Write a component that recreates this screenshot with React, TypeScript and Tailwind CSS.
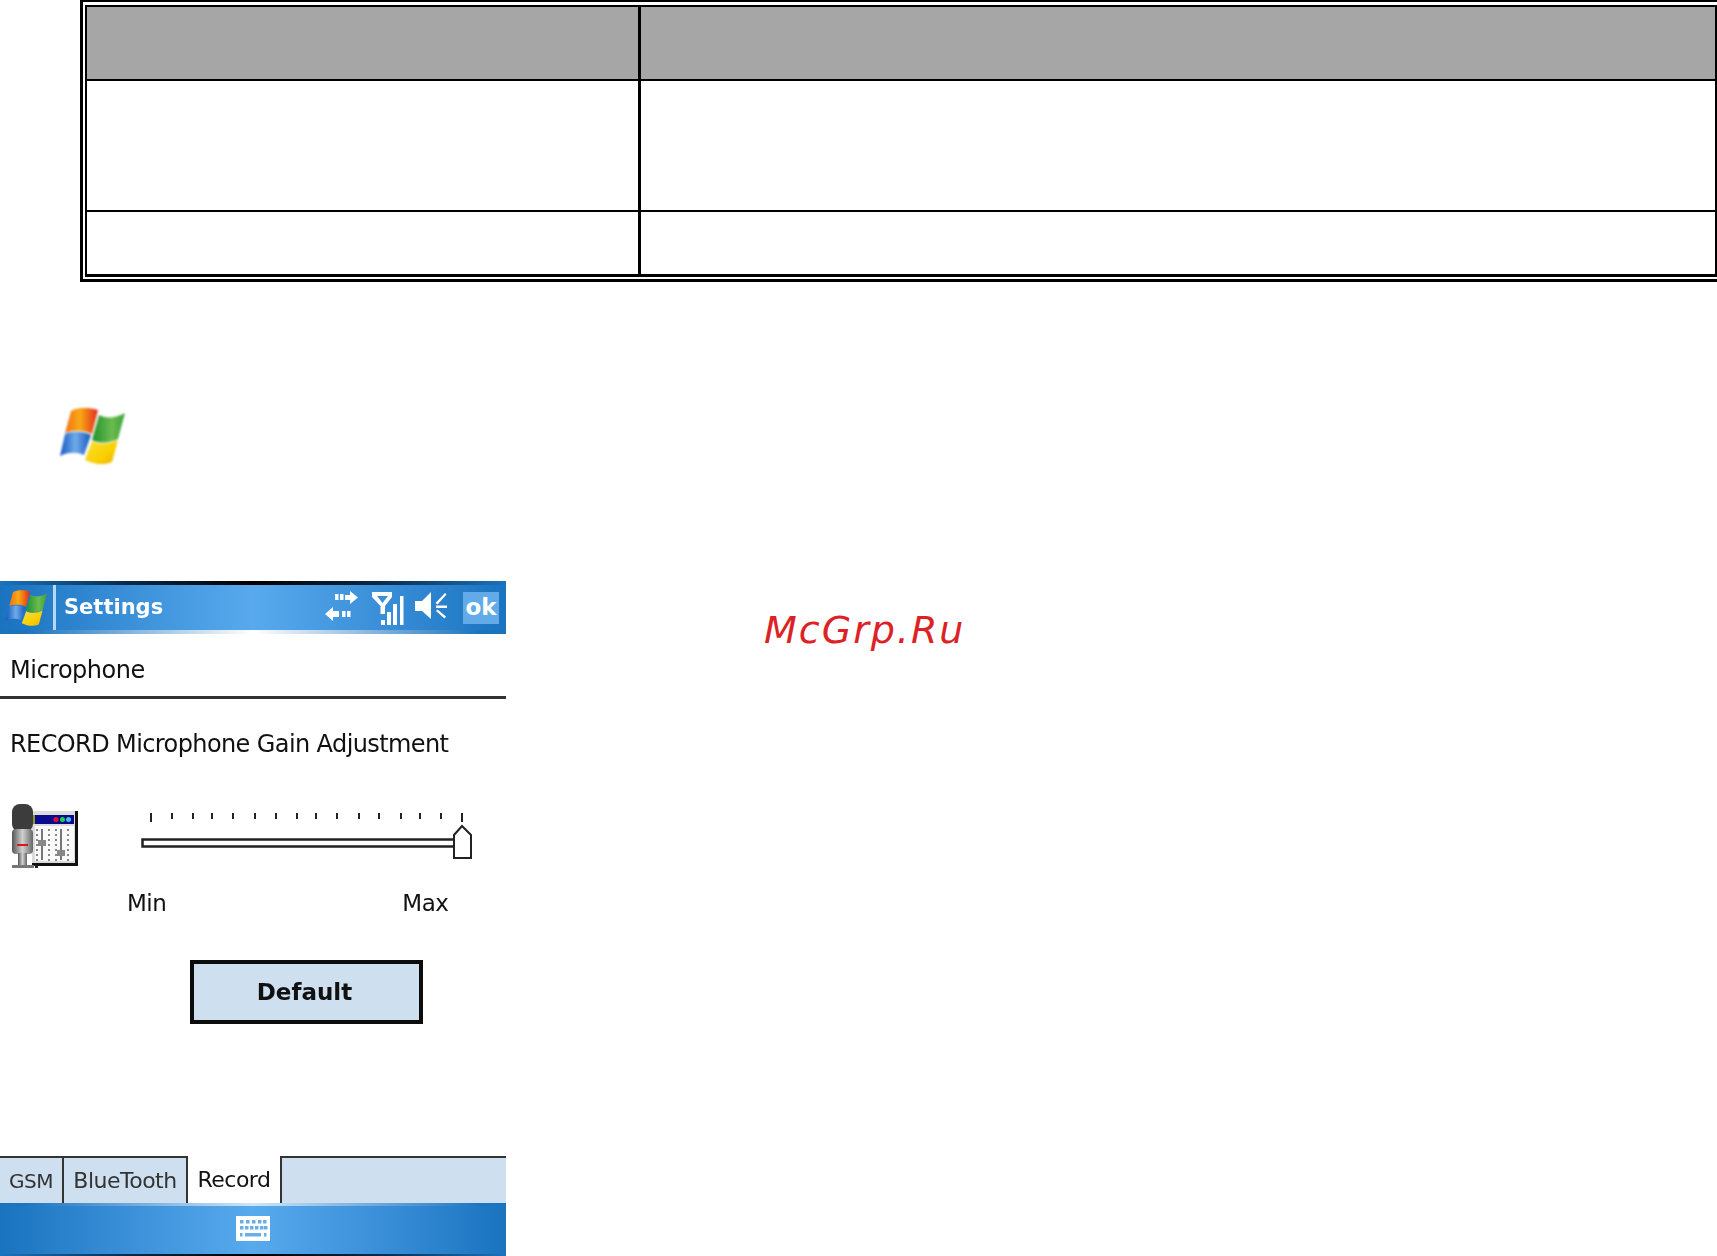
import React from 'react';

const WinLogo = ({ id, className }: { id: string; className?: string }) => (
  <svg viewBox="0 0 65 56" className={className}>
    <defs>
      <linearGradient id={`${id}-r`} x1="0" x2="1" y1="0" y2="0">
        <stop offset="0" stopColor="#f0701a" />
        <stop offset="0.45" stopColor="#f8aa14" />
        <stop offset="1" stopColor="#e32a1c" />
      </linearGradient>
      <linearGradient id={`${id}-g`} x1="0" x2="1" y1="0" y2="0">
        <stop offset="0" stopColor="#1f9230" />
        <stop offset="0.6" stopColor="#6cbb50" />
        <stop offset="1" stopColor="#3aa238" />
      </linearGradient>
      <linearGradient id={`${id}-b`} x1="0" x2="1" y1="0" y2="0">
        <stop offset="0" stopColor="#1258c4" />
        <stop offset="0.5" stopColor="#70abe8" />
        <stop offset="1" stopColor="#1558c0" />
      </linearGradient>
      <linearGradient id={`${id}-y`} x1="0" x2="1" y1="0" y2="1">
        <stop offset="0" stopColor="#f8e040" />
        <stop offset="0.6" stopColor="#f9d000" />
        <stop offset="1" stopColor="#eeb000" />
      </linearGradient>
    </defs>
    <path d="M11 3C18 -1 29 -1 38 2L32 26C24 22 13 22 5 25Z" fill={`url(#${id}-r)`} />
    <path d="M39 7C46 11 56 10 65 5L58 31C50 35 41 36 32 32Z" fill={`url(#${id}-g)`} />
    <path d="M5 26C12 23 23 23 31 27L24 47C16 44 8 44 0 48Z" fill={`url(#${id}-b)`} />
    <path d="M32 33C40 37 50 36 58 32L52 54C43 58 34 56 25 52Z" fill={`url(#${id}-y)`} />
  </svg>
);

const barBlue = 'bg-[linear-gradient(90deg,#1a73bf_0%,#3a8fd8_25%,#58aaed_50%,#3a8fd8_75%,#1a73bf_100%)]';

const StatusIcons = () => (
  <svg viewBox="325 590 122 38" className="w-[122px] h-[38px]" fill="#fff">
    {/* sync arrows */}
    <path d="M335 595h3.500v6h-3.500zM340 595h3.500v6h-3.500zM345 596h5v-4l8 6.500-8 6.500v-4h-5z" />
    <path d="M325 615l8-7v4h6v6h-6v4zM342 612h3.500v6h-3.500zM347 612h3.500v6h-3.500z" />
    {/* signal */}
    <path fillRule="evenodd" d="M372 593h20v5l-7 9v8h-4.500v-8l-8.500-9zM377 597l5.500 7 5.500-7z" />
    <path d="M381 621h4v5h-4zM387 613h4v13h-4zM393 605h4v21h-4zM400 597h3.500v29h-3.500z" />
    {/* speaker */}
    <path d="M415 602h7l9-9v27l-9-8h-7z" />
    <path d="M435.500 604l9.500-10 1.500 1.500-9 10zM436 606.500h11v2.500h-11zM436 612l1.500-1.500 8.500 7-1.500 2z" />
  </svg>
);

const MicIcon = () => (
  <svg viewBox="0 0 68 68" className="w-[68px] h-[68px]">
    <defs>
      <linearGradient id="micbody" x1="0" x2="1" y1="0" y2="0">
        <stop offset="0" stopColor="#555" />
        <stop offset="0.5" stopColor="#d0d0d0" />
        <stop offset="1" stopColor="#666" />
      </linearGradient>
    </defs>
    <rect x="21" y="8" width="46" height="55" fill="#111" />
    <rect x="21" y="8" width="43" height="52" fill="#dcdcdc" />
    <rect x="24" y="12" width="39" height="9" fill="#0a0a90" />
    <rect x="22" y="12" width="2" height="9" fill="#8a9a20" />
    <circle cx="45" cy="16.500" r="2.500" fill="#e01020" />
    <circle cx="51.500" cy="16.500" r="2.500" fill="#20d040" />
    <circle cx="57.500" cy="16.500" r="2.500" fill="#40c0e0" />
    <rect x="24" y="23" width="39" height="35" fill="#fafafa" />
    {[25, 37, 44, 56].map((x) =>
      [26, 31, 36, 41, 46, 51, 56].map((y) => (
        <rect key={`${x}-${y}`} x={x} y={y} width="2" height="2" fill="#888" />
      )),
    )}
    <rect x="30" y="26" width="2" height="31" fill="#777" />
    <rect x="49" y="26" width="2" height="31" fill="#777" />
    <rect x="27" y="37" width="8" height="6" fill="#888" />
    <rect x="46" y="47" width="8" height="6" fill="#888" />
    <rect x="1" y="1" width="21" height="28" rx="8" fill="#3c3c3c" />
    <rect x="1" y="26" width="21" height="25" rx="4" fill="url(#micbody)" />
    <rect x="6" y="41" width="11" height="2" fill="#d81818" />
    <rect x="7" y="50" width="9" height="12" fill="url(#micbody)" />
    <rect x="1" y="62" width="22" height="3" fill="#777" />
    <rect x="24" y="62" width="3" height="3" fill="#222" />
  </svg>
);

const ticks = [151, 172, 193, 212, 233, 255, 276, 297, 316, 337, 359, 379, 401, 420, 441, 462];

const Slider = () => (
  <svg viewBox="140 810 335 52" className="w-[335px] h-[52px]">
    {ticks.map((x, i) => (
      <rect key={x} x={x - 1} y="812" width="2" height={i === 0 || i === 15 ? 9 : 6} fill="#222" />
    ))}
    <rect x="142.500" y="838.500" width="312" height="7" fill="#fff" stroke="#222" strokeWidth="2.500" />
    <path d="M454 857V834L462 825L471 834V857Z" fill="#fff" stroke="#222" strokeWidth="2" />
  </svg>
);

const Keyboard = () => (
  <svg viewBox="0 0 34 25" className="w-[34px] h-[25px]">
    <rect width="34" height="25" fill="#fff" />
    {[4, 10, 16, 22, 27].map((x) => (
      <rect key={x} x={x} y="4" width="3.500" height="3.500" fill="#6aaee8" />
    ))}
    {[4, 9, 14, 19, 24, 28].map((x) => (
      <rect key={x} x={x} y="10" width="3.500" height="3.500" fill="#6aaee8" />
    ))}
    <rect x="4" y="17" width="2.500" height="3.500" fill="#6aaee8" />
    <rect x="9" y="17" width="16" height="3.500" fill="#6aaee8" />
    <rect x="28" y="17" width="2.500" height="3.500" fill="#6aaee8" />
  </svg>
);

export default function App() {
  return (
    <div className="relative w-[1717px] h-[1256px] overflow-hidden bg-white font-['DejaVu_Sans',sans-serif] text-[#111]">
      {/* table */}
      <div className="ml-[80px] w-[1700px] border-l-[3px] border-t-2 border-b-[3px] border-black pl-[2px] pt-[3px] pb-[2px]">
        <div className="w-[1632px] border-2 border-b-[3px] border-black">
          <div className="flex h-[74px] border-b-2 border-black bg-[#a6a6a6]">
            <div className="w-[554px] border-r-[3px] border-black" />
          </div>
          <div className="flex h-[131px] border-b-2 border-black">
            <div className="w-[554px] border-r-[3px] border-black" />
          </div>
          <div className="flex h-[62px]">
            <div className="w-[554px] border-r-[3px] border-black" />
          </div>
        </div>
      </div>

      <WinLogo id="big" className="ml-[60px] mt-[126px] w-[65px] h-[56px] blur-[0.8px]" />

      {/* phone */}
      <div className="mt-[117px] w-[506px] h-[676px] flex flex-col blur-[0.6px]">
        <div className={`relative h-[53px] flex items-center ${barBlue}`}>
          <div className="absolute top-0 inset-x-0 h-[4px] bg-[linear-gradient(90deg,#1a73bf_0%,#0a2a4a_25%,#000_50%,#0a2a4a_75%,#1a73bf_100%)]" />
          <div className="absolute bottom-0 inset-x-0 h-[4px] bg-[linear-gradient(90deg,#1a73bf_5%,#fff_50%,#1a73bf_95%)]" />
          <WinLogo id="small" className="ml-[6px] w-[41px] h-[38px]" />
          <div className="ml-[6px] w-[3px] h-[46px] bg-[#b5d8f5]" />
          <span className="ml-[8px] text-[21px] font-bold text-white leading-none">Settings</span>
          <div className="ml-auto mr-[7px] flex items-center gap-[16px]">
            <StatusIcons />
            <div className="w-[36px] h-[32px] bg-[#62abe8] flex items-center justify-center text-[23px] font-bold text-white leading-none">ok</div>
          </div>
        </div>

        <div className="h-[65px] pl-[10px] pt-[10px] flex items-center border-b-[3px] border-[#333] text-[24px] tracking-[-0.5px]">Microphone</div>

        <div className="pl-[10px] pt-[30px] text-[24px] leading-[30px] tracking-[-0.6px]">RECORD Microphone Gain Adjustment</div>

        <div className="mt-[44px] flex items-start">
          <div className="ml-[11px]"><MicIcon /></div>
          <div className="ml-[61px] mt-[8px]"><Slider /></div>
        </div>

        <div className="mt-[17px] flex text-[23px] leading-[30px] tracking-[-0.5px]">
          <span className="ml-[127px]">Min</span>
          <span className="ml-[236px]">Max</span>
        </div>

        <div className="ml-[190px] mt-[42px] w-[233px] h-[64px] border-4 border-[#0c0c0c] bg-[#cedff0] flex items-center justify-center pr-[4px] text-[23px] font-bold">Default</div>

        <div className="mt-auto h-[47px] flex text-[22px] tracking-[-0.5px]">
          <div className="w-[64px] border-t-2 border-r-2 border-[#333] bg-[#cedff0] flex items-center justify-center text-[20px] text-[#333]">GSM</div>
          <div className="w-[124px] border-t-2 border-r-2 border-[#333] bg-[#cedff0] flex items-center justify-center text-[#333]">BlueTooth</div>
          <div className="w-[92px] bg-white flex items-center justify-center">Record</div>
          <div className="flex-1 border-t-2 border-l-2 border-[#333] bg-[#cedff0]" />
        </div>

        <div className={`relative h-[54px] flex items-center justify-center pb-[3px] ${barBlue}`}>
          <div className="absolute top-0 inset-x-0 h-[3px] bg-[linear-gradient(90deg,#1a73bf_5%,#fff_50%,#1a73bf_95%)] opacity-70" />
          <div className="absolute bottom-0 inset-x-0 h-[3px] bg-[linear-gradient(90deg,#1a73bf_0%,#0a2a4a_25%,#000_50%,#0a2a4a_75%,#1a73bf_100%)]" />
          <Keyboard />
        </div>
      </div>

      {/* watermark */}
      <div className="absolute left-[764px] top-[606px] text-[38px] italic leading-[48px] tracking-[2px] text-[#dd2226]">McGrp.Ru</div>
    </div>
  );
}
